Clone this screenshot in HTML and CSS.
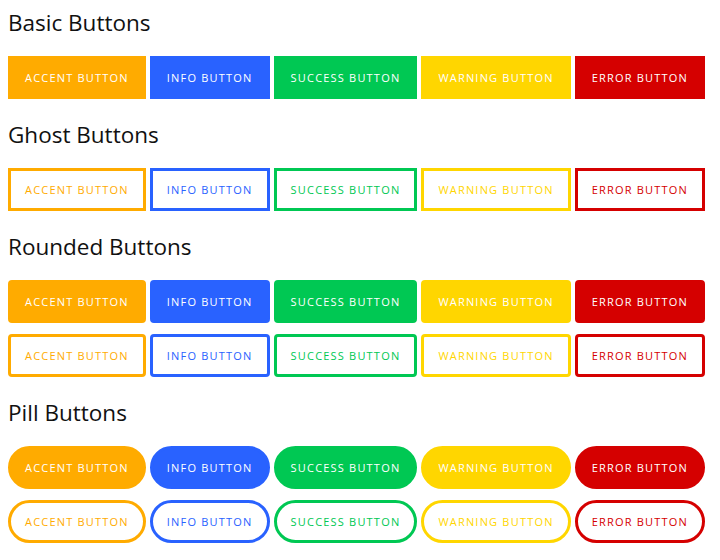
FILE: index.html
```html
<!DOCTYPE html>
<html>
<head>
<meta charset="utf-8">
<link rel="stylesheet" href="styles.css">
</head>
<body>
<section class="section">
  <h2 class="title">Basic Buttons</h2>
  <div class="row">
    <button class="btn accent">Accent Button</button>
    <button class="btn info">Info Button</button>
    <button class="btn success">Success Button</button>
    <button class="btn warning">Warning Button</button>
    <button class="btn error">Error Button</button>
  </div>
</section>
<section class="section">
  <h2 class="title">Ghost Buttons</h2>
  <div class="row">
    <button class="btn ghost accent">Accent Button</button>
    <button class="btn ghost info">Info Button</button>
    <button class="btn ghost success">Success Button</button>
    <button class="btn ghost warning">Warning Button</button>
    <button class="btn ghost error">Error Button</button>
  </div>
</section>
<section class="section">
  <h2 class="title">Rounded Buttons</h2>
  <div class="row">
    <button class="btn rounded accent">Accent Button</button>
    <button class="btn rounded info">Info Button</button>
    <button class="btn rounded success">Success Button</button>
    <button class="btn rounded warning">Warning Button</button>
    <button class="btn rounded error">Error Button</button>
  </div>
  <div class="row">
    <button class="btn rounded ghost accent">Accent Button</button>
    <button class="btn rounded ghost info">Info Button</button>
    <button class="btn rounded ghost success">Success Button</button>
    <button class="btn rounded ghost warning">Warning Button</button>
    <button class="btn rounded ghost error">Error Button</button>
  </div>
</section>
<section class="section">
  <h2 class="title">Pill Buttons</h2>
  <div class="row">
    <button class="btn pill accent">Accent Button</button>
    <button class="btn pill info">Info Button</button>
    <button class="btn pill success">Success Button</button>
    <button class="btn pill warning">Warning Button</button>
    <button class="btn pill error">Error Button</button>
  </div>
  <div class="row">
    <button class="btn pill ghost accent">Accent Button</button>
    <button class="btn pill ghost info">Info Button</button>
    <button class="btn pill ghost success">Success Button</button>
    <button class="btn pill ghost warning">Warning Button</button>
    <button class="btn pill ghost error">Error Button</button>
  </div>
</section>
</body>
</html>
```
FILE: styles.css
```css
body {
  margin: 8px;
  background: #ffffff;
  font-family: "Open Sans", "Noto Sans", sans-serif;
  color: #111;
}
.section {
  display: flex;
  flex-direction: column;
  gap: 11px;
  margin-bottom: 21px;
}
.title {
  margin: 0 0 7px;
  font-size: 22.5px;
  font-weight: 400;
  line-height: 30px;
  color: #111;
}
.row {
  display: flex;
  gap: 4px;
}
.btn {
  flex: none;
  height: 43px;
  padding: 0 14px;
  border: 3px solid transparent;
  background: #999;
  color: #fff;
  font-family: inherit;
  font-size: 11px;
  letter-spacing: 1.2px;
  white-space: nowrap;
  text-transform: uppercase;
  border-radius: 0;
  cursor: pointer;
}
.accent { background: #ffab00; border-color: #ffab00; }
.info { background: #2962ff; border-color: #2962ff; }
.success { background: #00c853; border-color: #00c853; }
.warning { background: #ffd600; border-color: #ffd600; }
.error { background: #d50000; border-color: #d50000; }
.ghost { background: #fff; }
.ghost.accent { color: #ffab00; }
.ghost.info { color: #2962ff; }
.ghost.success { color: #00c853; }
.ghost.warning { color: #ffd600; }
.ghost.error { color: #d50000; }
.rounded { border-radius: 4px; }
.pill { border-radius: 22px; }
```
